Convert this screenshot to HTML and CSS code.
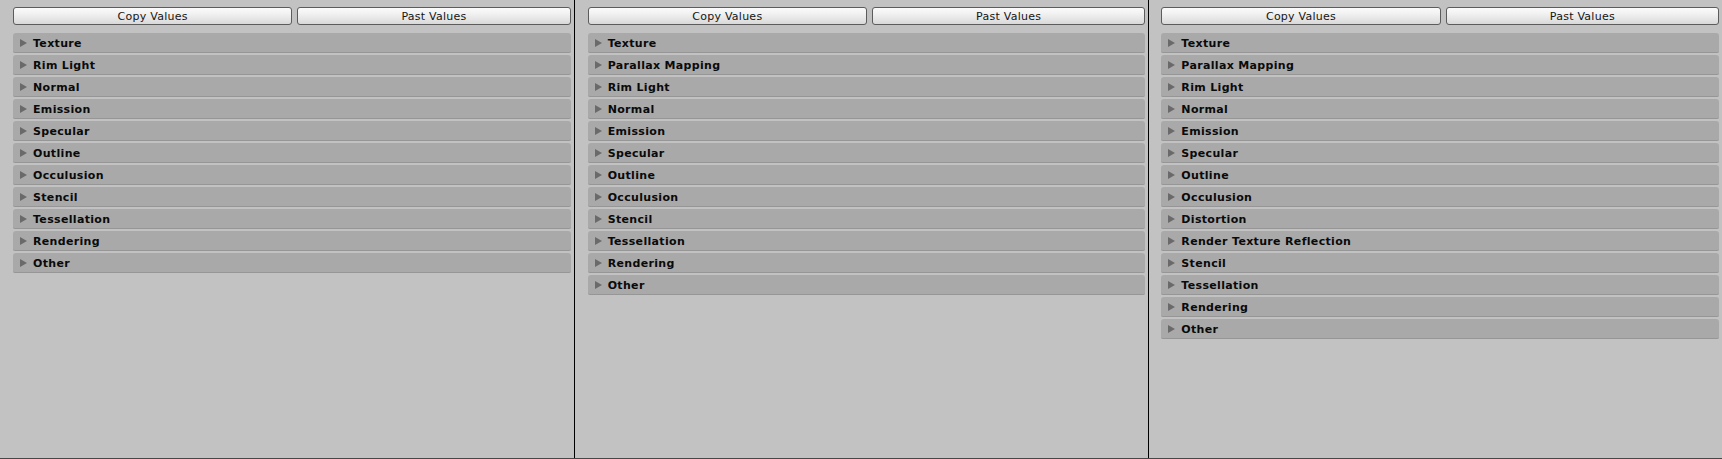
FILE: index.html
```html
<!DOCTYPE html>
<html>
<head>
<meta charset="utf-8">
<link rel="stylesheet" href="styles.css">
</head>
<body>
<div class="window">
  <div class="panel">
    <div class="buttons"><div class="btn">Copy Values</div><div class="btn">Past Values</div></div>
    <div class="list">
      <div class="row"><span class="arrow"></span>Texture</div>
      <div class="row"><span class="arrow"></span>Rim Light</div>
      <div class="row"><span class="arrow"></span>Normal</div>
      <div class="row"><span class="arrow"></span>Emission</div>
      <div class="row"><span class="arrow"></span>Specular</div>
      <div class="row"><span class="arrow"></span>Outline</div>
      <div class="row"><span class="arrow"></span>Occulusion</div>
      <div class="row"><span class="arrow"></span>Stencil</div>
      <div class="row"><span class="arrow"></span>Tessellation</div>
      <div class="row"><span class="arrow"></span>Rendering</div>
      <div class="row"><span class="arrow"></span>Other</div>
    </div>
  </div>
  <div class="panel">
    <div class="buttons"><div class="btn">Copy Values</div><div class="btn">Past Values</div></div>
    <div class="list">
      <div class="row"><span class="arrow"></span>Texture</div>
      <div class="row"><span class="arrow"></span>Parallax Mapping</div>
      <div class="row"><span class="arrow"></span>Rim Light</div>
      <div class="row"><span class="arrow"></span>Normal</div>
      <div class="row"><span class="arrow"></span>Emission</div>
      <div class="row"><span class="arrow"></span>Specular</div>
      <div class="row"><span class="arrow"></span>Outline</div>
      <div class="row"><span class="arrow"></span>Occulusion</div>
      <div class="row"><span class="arrow"></span>Stencil</div>
      <div class="row"><span class="arrow"></span>Tessellation</div>
      <div class="row"><span class="arrow"></span>Rendering</div>
      <div class="row"><span class="arrow"></span>Other</div>
    </div>
  </div>
  <div class="panel">
    <div class="buttons"><div class="btn">Copy Values</div><div class="btn">Past Values</div></div>
    <div class="list">
      <div class="row"><span class="arrow"></span>Texture</div>
      <div class="row"><span class="arrow"></span>Parallax Mapping</div>
      <div class="row"><span class="arrow"></span>Rim Light</div>
      <div class="row"><span class="arrow"></span>Normal</div>
      <div class="row"><span class="arrow"></span>Emission</div>
      <div class="row"><span class="arrow"></span>Specular</div>
      <div class="row"><span class="arrow"></span>Outline</div>
      <div class="row"><span class="arrow"></span>Occulusion</div>
      <div class="row"><span class="arrow"></span>Distortion</div>
      <div class="row"><span class="arrow"></span>Render Texture Reflection</div>
      <div class="row"><span class="arrow"></span>Stencil</div>
      <div class="row"><span class="arrow"></span>Tessellation</div>
      <div class="row"><span class="arrow"></span>Rendering</div>
      <div class="row"><span class="arrow"></span>Other</div>
    </div>
  </div>
</div>
</body>
</html>
```
FILE: styles.css
```css
html, body {
  margin: 0;
  padding: 0;
  background: #c2c2c2;
}
body {
  width: 1722px;
  height: 459px;
  overflow: hidden;
  font-family: "DejaVu Sans", Verdana, sans-serif;
}
.window {
  display: flex;
  height: 458px;
  border-bottom: 1px solid #474747;
}
.panel {
  flex: 1 1 0;
  min-width: 0;
  padding: 7px 3px 0 13px;
  border-right: 1px solid #000;
}
.panel:last-child {
  border-right: none;
  padding-left: 12px;
}
.buttons {
  display: grid;
  grid-template-columns: 280fr 274fr;
  gap: 5px;
  height: 18px;
}
.btn {
  box-sizing: border-box;
  height: 18px;
  padding-top: 1px;
  border: 1px solid #5c5c5c;
  border-radius: 3px;
  background: linear-gradient(#fbfbfb 0%, #f0f0f0 40%, #d9d9d9 100%);
  font-size: 11px;
  line-height: 15px;
  text-align: center;
  color: #151515;
  letter-spacing: 0.25px;
}
.list {
  margin-top: 8px;
  display: flex;
  flex-direction: column;
  gap: 2px;
}
.row {
  box-sizing: border-box;
  height: 20px;
  padding-top: 1px;
  background: #a9a9a9;
  border-bottom: 1px solid #969696;
  border-radius: 3px 3px 2px 2px;
  display: flex;
  align-items: center;
  padding-left: 7px;
  font-size: 11px;
  font-weight: bold;
  color: #0a0a0a;
  letter-spacing: 0.33px;
}
.arrow {
  width: 0;
  height: 0;
  border-top: 4px solid transparent;
  border-bottom: 4px solid transparent;
  border-left: 7px solid #6a6a6a;
  margin-right: 6px;
  margin-top: -1px;
}
```
